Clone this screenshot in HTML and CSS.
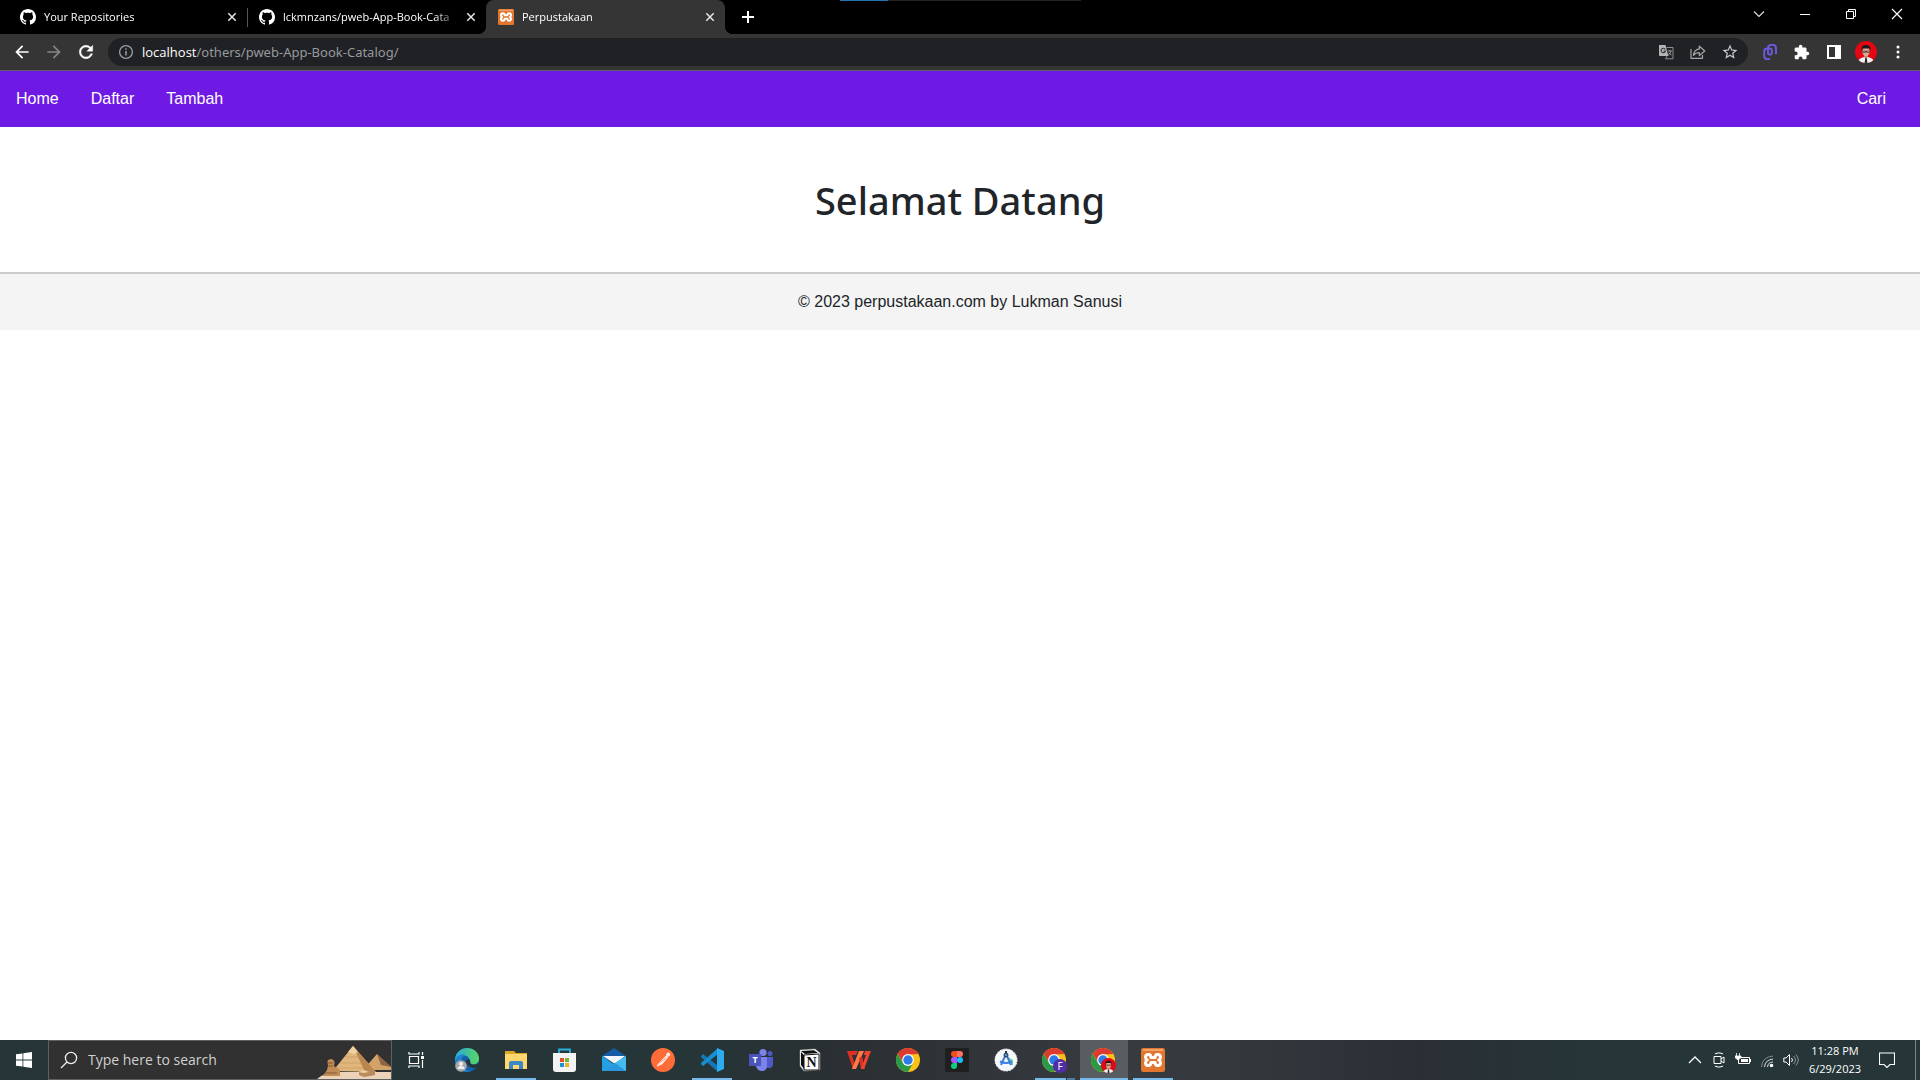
FILE: index.html
```html
<!DOCTYPE html>
<html lang="id">
<head>
<meta charset="utf-8">
<meta name="viewport" content="width=device-width, initial-scale=1">
<title>Perpustakaan</title>
<link rel="stylesheet" href="styles.css">
</head>
<body>
<svg class="defs" aria-hidden="true">
  <symbol id="github" viewBox="0 0 16 16"><path fill="#fff" d="M8 0C3.58 0 0 3.58 0 8c0 3.54 2.29 6.53 5.47 7.59.4.07.55-.17.55-.38 0-.19-.01-.82-.01-1.49-2.01.37-2.53-.49-2.69-.94-.09-.23-.48-.94-.82-1.13-.28-.15-.68-.52-.01-.53.63-.01 1.08.58 1.23.82.72 1.21 1.87.87 2.33.66.07-.52.28-.87.51-1.07-1.78-.2-3.64-.89-3.64-3.95 0-.87.31-1.59.82-2.15-.08-.2-.36-1.02.08-2.12 0 0 .67-.21 2.2.82.64-.18 1.32-.27 2-.27s1.36.09 2 .27c1.53-1.04 2.2-.82 2.2-.82.44 1.1.16 1.92.08 2.12.51.56.82 1.27.82 2.15 0 3.07-1.87 3.75-3.65 3.95.29.25.54.73.54 1.48 0 1.07-.01 1.93-.01 2.2 0 .21.15.46.55.38A8.01 8.01 0 0 0 16 8c0-4.42-3.58-8-8-8z"/></symbol>
  <symbol id="xampp" viewBox="0 0 24 24"><rect width="24" height="24" rx="2" fill="#e2762f"/><path d="M2 1h20v2H2z" fill="#f2a26c"/><path d="M7.500 6.500C5.300 6.500 4.500 7.800 4.500 9.300c0 1.500.9 2.200 1.800 2.700-1 .5-1.800 1.400-1.800 2.800 0 1.700 1 2.700 2.600 2.700 2.200 0 2.800-1.500 2.800-3h4.200c0 1.500.6 3 2.800 3 1.600 0 2.600-1 2.600-2.700 0-1.400-.8-2.300-1.800-2.800.9-.5 1.800-1.200 1.800-2.700 0-1.500-.8-2.800-3-2.800-2 0-2.400 1.500-2.400 2.900H9.900c0-1.400-.4-2.900-2.400-2.900z" fill="none" stroke="#fff" stroke-width="3" stroke-linejoin="round"/></symbol>
  <symbol id="cross" viewBox="0 0 16 16"><path d="M4.300 4.300l7.400 7.400M11.700 4.300l-7.400 7.400" stroke="#e8e8e8" stroke-width="1.500"/></symbol>
  <symbol id="arrow" viewBox="0 0 24 24"><path fill="currentColor" d="M20 11H7.830l5.590-5.590L12 4l-8 8 8 8 1.410-1.410L7.830 13H20v-2z"/></symbol>
  <symbol id="chrome" viewBox="0 0 24 24"><circle cx="12" cy="12" r="12" fill="#fbc116"/><path d="M1.600 6A12 12 0 0 1 22.400 6L12 6.500 7.200 14.600z" fill="#dc3b30"/><path d="M1.600 6A12 12 0 0 0 12 24l5-8.800-5 2.400-4.900-2.700z" fill="#2b9a48"/><circle cx="12" cy="12" r="5.900" fill="#fff"/><circle cx="12" cy="12" r="4.700" fill="#2d7bea"/></symbol>
  <symbol id="person" viewBox="0 0 22 22"><clipPath id="round"><circle cx="11" cy="11" r="11"/></clipPath><g clip-path="url(#round)"><path fill="#e30613" d="M0 0h22v22H0z"/><path d="M3 22c0-4 3-5 6-6h4c3 1 6 2 6 6z" fill="#f1f1f1"/><path d="M9 13h4v3l-2 2-2-2z" fill="#b98770"/><ellipse cx="11" cy="10.500" rx="3.700" ry="4.700" fill="#d9ab92"/><path d="M6.800 10C6 5.500 8 4 11 4s5 1.500 4.200 6l-.9-2.600H7.700z" fill="#201719"/><path d="M7.700 10h2.600v1.500H7.700zM11.700 10h2.600v1.500h-2.600zM10 10.500h2" fill="none" stroke="#332526" stroke-width=".6"/><path d="M10.300 17h1.400l.7 5H9.600z" fill="#222"/></g></symbol>
</svg>

<header class="browser">
  <div class="tabstrip">
    <div class="tabs">
      <div class="tab tab-divided"><svg class="i16"><use href="#github"/></svg><span class="tab-title">Your Repositories</span><button class="tab-close" aria-label="Close tab"><svg class="i16"><use href="#cross"/></svg></button></div>
      <div class="tab"><svg class="i16"><use href="#github"/></svg><span class="tab-title">lckmnzans/pweb-App-Book-Cata</span><button class="tab-close" aria-label="Close tab"><svg class="i16"><use href="#cross"/></svg></button></div>
      <div class="tab tab-active"><svg class="i16"><use href="#xampp"/></svg><span class="tab-title">Perpustakaan</span><button class="tab-close" aria-label="Close tab"><svg class="i16"><use href="#cross"/></svg></button></div>
      <button class="new-tab" aria-label="New tab"><svg class="i16" viewBox="0 0 16 16"><path d="M8 2v12M2 8h12" stroke="#fff" stroke-width="2"/></svg></button>
    </div>
    <div class="progress"><span></span></div>
    <div class="window-controls">
      <button aria-label="Search tabs"><svg class="i12" viewBox="0 0 12 12"><path d="M1 3.500l5 5 5-5" fill="none" stroke="#ddd" stroke-width="1.200"/></svg></button>
      <button aria-label="Minimize"><svg class="i12" viewBox="0 0 12 12"><path d="M1 6.500h10" stroke="#fff"/></svg></button>
      <button aria-label="Restore"><svg class="i12" viewBox="0 0 12 12"><path d="M1.500 3.500h7v7h-7zM3.500 3.500v-2h7v7h-2" fill="none" stroke="#fff"/></svg></button>
      <button aria-label="Close"><svg class="i12" viewBox="0 0 12 12"><path d="M1 1l10 10M11 1L1 11" stroke="#fff" stroke-width="1.200"/></svg></button>
    </div>
  </div>
  <div class="toolbar">
    <button class="tool" aria-label="Back"><svg class="i20"><use href="#arrow"/></svg></button>
    <button class="tool tool-forward" aria-label="Forward"><svg class="i20"><use href="#arrow"/></svg></button>
    <button class="tool" aria-label="Reload"><svg class="i20" viewBox="0 0 24 24"><path fill="#fff" stroke="#fff" stroke-width=".5" d="M17.650 6.350C16.200 4.900 14.210 4 12 4c-4.420 0-7.990 3.580-7.990 8s3.570 8 7.990 8c3.730 0 6.840-2.550 7.730-6h-2.080c-.82 2.330-3.040 4-5.650 4-3.310 0-6-2.690-6-6s2.690-6 6-6c1.660 0 3.140.69 4.220 1.780L13 11h7V4l-2.350 2.350z"/></svg></button>
    <div class="omnibox">
      <button class="tool" aria-label="Site information"><svg class="i16" viewBox="0 0 16 16"><circle cx="8" cy="8" r="6.400" fill="none" stroke="#9aa0a6" stroke-width="1.300"/><path d="M8 7v4.500M8 4.300v1.500" stroke="#9aa0a6" stroke-width="1.500"/></svg></button>
      <label class="host" for="address">localhost</label><input class="path" id="address" type="text" value="/others/pweb-App-Book-Catalog/">
      <button class="tool" aria-label="Translate"><svg class="i16" viewBox="0 0 16 16"><path d="M1 1h6.500l2.800 11H2a1 1 0 0 1-1-1z" fill="#b4b5b7"/><path d="M8.500 3.500H15v11.300H7.500L9 12" fill="none" stroke="#8c8e91"/><path d="M7.200 5.400A2.200 2.200 0 1 0 7.400 7H5.500" fill="none" stroke="#35363a" stroke-width="1.100"/><path d="M9.800 7h4M11.800 6v1M13 7c-.3 2-1.500 3.500-3 4.300M10.800 8.500c.6 1.200 1.600 2 2.700 2.600" fill="none" stroke="#a5a6a8" stroke-width=".9"/></svg></button>
      <button class="tool" aria-label="Share"><svg class="i16" viewBox="0 0 16 16"><path d="M1 5v9.300h11.500V11M9.300 2.200L14.800 7l-5.500 4.500V8.700C6 8.700 4.800 9.500 3.500 11.400c.3-3.600 2.300-6 5.800-6.500z" fill="none" stroke="#a4a6a8" stroke-width="1.200" stroke-linejoin="round"/></svg></button>
      <button class="tool" aria-label="Bookmark"><svg class="i18" viewBox="0 0 24 24"><path fill="#c7c9cc" d="M22 9.240l-7.190-.62L12 2 9.190 8.630 2 9.240l5.460 4.730L5.820 21 12 17.270 18.180 21l-1.630-7.030L22 9.240zM12 15.400l-3.760 2.270 1-4.280-3.320-2.880 4.380-.38L12 6.100l1.710 4.040 4.380.38-3.320 2.880 1 4.280L12 15.400z"/></svg></button>
    </div>
    <button class="tool" aria-label="Extension"><svg class="i16" viewBox="0 0 16 16"><path d="M14 10V4.300Q14 .9 10.800.9H9.200Q6 .9 6 4v5.300q0 1.200 1.200 1.200h1.300q1.300 0 1.300-1.300V6.500q0-2-2-2H5.200q-3 0-3 3v4.200q0 3.400 3.200 3.400h2.800" fill="none" stroke="#6a5be2" stroke-width="1.900"/></svg></button>
    <button class="tool" aria-label="Extensions"><svg class="i16" viewBox="1 0 23 23"><path fill="#fff" d="M20.500 11H19V7c0-1.100-.9-2-2-2h-4V3.500C13 2.120 11.880 1 10.500 1S8 2.120 8 3.500V5H4c-1.100 0-1.990.9-1.990 2v3.800H3.500c1.490 0 2.700 1.210 2.700 2.700s-1.210 2.700-2.700 2.700H2V20c0 1.100.9 2 2 2h3.800v-1.500c0-1.490 1.210-2.700 2.700-2.700 1.490 0 2.700 1.210 2.700 2.700V22H17c1.100 0 2-.9 2-2v-4h1.500c1.380 0 2.500-1.120 2.500-2.500S21.880 11 20.500 11z"/></svg></button>
    <button class="tool" aria-label="Side panel"><svg class="i16" viewBox="0 0 16 16"><path fill="#fff" fill-rule="evenodd" d="M1 1h14v14H1zM3 3v10h6V3z"/></svg></button>
    <button class="tool" aria-label="Profile"><svg class="i22"><use href="#person"/></svg></button>
    <button class="tool" aria-label="Menu"><svg class="i16" viewBox="0 0 16 16"><circle cx="8" cy="3" r="1.500" fill="#fff"/><circle cx="8" cy="8" r="1.500" fill="#fff"/><circle cx="8" cy="13" r="1.500" fill="#fff"/></svg></button>
  </div>
</header>

<div class="page">
  <nav class="navbar">
    <a href="#home">Home</a><a href="#daftar">Daftar</a><a href="#tambah">Tambah</a><a class="nav-search" href="#cari">Cari</a>
  </nav>
  <main class="welcome"><h1>Selamat Datang</h1></main>
  <footer class="footer">© 2023 perpustakaan.com by Lukman Sanusi</footer>
</div>

<div class="taskbar">
  <button class="task" aria-label="Start"><svg class="i16" viewBox="0 0 16 16"><path fill="#fff" d="M0 2.300L6.500 1.400v6.100H0zM7.300 1.300L16 0v7.500H7.300zM0 8.400h6.500v6.200L0 13.700zM7.300 8.400H16V16l-8.700-1.300z"/></svg></button>
  <div class="search">
    <svg class="i18" viewBox="0 0 18 18"><circle cx="11" cy="7" r="5.600" fill="none" stroke="#eee" stroke-width="1.300"/><path d="M7 11l-6 6" stroke="#eee" stroke-width="1.300"/></svg>
    <input type="text" placeholder="Type here to search" aria-label="Type here to search">
    <svg class="pyramids" viewBox="0 0 76 38"><path d="M2 38q8-7 20-7h54v7z" fill="#ecd2b8"/><path d="M62 13l14 13v3H48z" fill="#d2a268"/><path d="M62 13l14 13-10-2z" fill="#8d6540"/><path d="M38 5L18 30l43 1z" fill="#e0b67c"/><path d="M38 5l12 26h11z" fill="#b9864f"/><path d="M33 11l5-6 5 6-4 2z" fill="#efd29f"/><path d="M30 16h15M25 22h22M21 27h27" stroke="#c4965d" stroke-width=".6"/><path d="M9 33q4-4 4-9-2-6 3-6 5 1 3 7l6 4v6H8z" fill="#c08b54"/><path d="M13 22h5M13 25h5M10 32h12" stroke="#875b35"/><path d="M44 31l6-2 5 2v4l-6 1-5-2zM52 30l5-1 3 2v3l-5 1z" fill="#ba8b5d"/><path d="M43 31l6-2 5 2-5 1z" fill="#efcf9d"/></svg>
  </div>
  <button class="task task-view" aria-label="Task view"><svg class="i18" viewBox="0 0 18 18"><path d="M2.500 5.500h9v7h-9zM2 1v2h10V1M2 17v-2h10v2M15.500 1v3M15.500 9v8" fill="none" stroke="#fff" stroke-width="1.200"/><path d="M14 5h3v3h-3z" fill="#fff"/></svg></button>
  <button class="task" aria-label="Edge"><svg class="i24" viewBox="0 0 24 24"><defs><linearGradient id="eg"><stop stop-color="#29a9dc"/><stop offset="1" stop-color="#5bd661"/></linearGradient></defs><circle cx="12" cy="12" r="12" fill="#1361aa"/><path d="M0 11C1 4 6 0 12 0c7 0 12 5 12 10.500 0 4-3 6-6.500 6-3 0-4.800-1-4-2.500 2.500-4-1.500-7-5.500-6.500C3.500 8 .5 12 0 14z" fill="url(#eg)"/><path d="M0 12c2-5 7-7 11-5-5 1-6 7-3 12 2 3 5 4 8 4-8 3-16-3-16-11z" fill="#2084cc"/><path d="M14.500 11c1.500 4 0 5 4 5.500 2 0 4-.5 4.500-1.500l1 4-5 1c-5-.5-9-4-8-8z" fill="#263638"/><circle cx="6" cy="18" r="5.800" fill="#a7a9a9"/><circle cx="6" cy="15.800" r="2.100" fill="#eee"/><path d="M2.500 21q0-3 3.500-3t3.500 3z" fill="#eee"/></svg></button>
  <button class="task running" aria-label="File Explorer"><svg class="i24" viewBox="0 0 24 24"><path d="M1 3h9l2 2h11v16H1z" fill="#dda723"/><path d="M1 6h22v15H1z" fill="#ffd76d"/><path d="M5 21v-6q0-2 2-2h10q2 0 2 2v6h-4v-4H9v4z" fill="#3c87c8"/></svg></button>
  <button class="task" aria-label="Microsoft Store"><svg class="i24" viewBox="1 0 24 24"><path d="M7 6V1.500h11V6" fill="none" stroke="#2ab1df" stroke-width="1.800"/><path d="M1 5h23v16q0 3-3 3H4q-3 0-3-3z" fill="#f3f3f3"/><path d="M8 10h4v4H8z" fill="#e34f2b"/><path d="M13 10h4v4h-4z" fill="#75b72b"/><path d="M8 15h4v4H8z" fill="#1c95d4"/><path d="M13 15h4v4h-4z" fill="#f1b322"/></svg></button>
  <button class="task" aria-label="Mail"><svg class="i24" viewBox="0 0 24 24"><path d="M0 8L12 0l12 8v4H0z" fill="#155ca5"/><path d="M1 8h22l-10 8z" fill="#f3f7fa"/><path d="M0 8l13 9-10 6H0z" fill="#23a0e3"/><path d="M24 8v15H0z" fill="#42bced"/><path d="M13 15l11 8H0z" fill="#2998dc"/></svg></button>
  <button class="task" aria-label="Postman"><svg class="i24" viewBox="0 0 24 24"><circle cx="12" cy="12" r="12" fill="#ff6c37"/><path d="M6 18l3-4 6-6 2 1-6 7zM15 8l3-2" fill="#ffe8df" stroke="#ffe8df"/><circle cx="17.300" cy="6.500" r="2" fill="#ffe8df"/><path d="M8 15l7-5" stroke="#ff6c37" stroke-width=".6"/></svg></button>
  <button class="task running" aria-label="Visual Studio Code"><svg class="i24" viewBox="0 0 24 24"><path d="M1 8l2-2 15 12v6L1 9z" fill="#1377b9"/><path d="M1 16l2 2L18 6V0L1 15z" fill="#178dd2"/><path d="M17 0l7 3v18l-7 3V0z" fill="#2eabef"/></svg></button>
  <button class="task" aria-label="Teams"><svg class="i24" viewBox="0 0 24 24"><circle cx="14" cy="4.500" r="3.600" fill="#7c83eb"/><circle cx="21" cy="5.500" r="2.500" fill="#5058c5"/><path d="M16 9h8v7q0 4-4 4h-4z" fill="#5059c9"/><path d="M8 9h10v8q0 6-5 6t-6-5z" fill="#7b83eb"/><path d="M0 6h12v12H0z" fill="#4b53bc"/><text x="6" y="15" class="logo-t">T</text></svg></button>
  <button class="task" aria-label="Notion"><svg class="i24" viewBox="0 0 24 24"><path d="M2 2l15-1 5 4v17l-16 1-4-5z" fill="#fff" stroke="#aaa" stroke-width=".5"/><path d="M3 3l13-.8L20 5 7 6zM3 4l3 3v14l-3-4z" fill="#111"/><path d="M6 7l15-1v16L6 22z" fill="#fff" stroke="#111"/><text x="13.500" y="19" class="logo-n">N</text></svg></button>
  <button class="task" aria-label="WPS Office"><svg class="i24" viewBox="0 0 24 24"><path d="M0 3h11l-2 4H5l4 14H6z" fill="#df3122"/><path d="M12 3h5L9 21H5z" fill="#ff7a4a"/><path d="M12 10l3-2 3 13h-4z" fill="#df3122"/><path d="M24 3l-7 18h-3l5-14h-2l1-4z" fill="#f2452f"/></svg></button>
  <button class="task" aria-label="Chrome"><svg class="i24"><use href="#chrome"/></svg></button>
  <button class="task" aria-label="Figma"><svg class="i24" viewBox="0 0 24 24"><rect width="24" height="24" rx="1" fill="#1f1f20"/><path d="M12 3H9a3 3 0 0 0 0 6h3z" fill="#f24e1e"/><path d="M12 3h3a3 3 0 0 1 0 6h-3z" fill="#ff7262"/><path d="M12 9H9a3 3 0 0 0 0 6h3z" fill="#a259ff"/><circle cx="15" cy="12" r="3" fill="#1abcfe"/><path d="M12 15H9a3 3 0 1 0 3 3z" fill="#0acf83"/></svg></button>
  <button class="task" aria-label="Android Studio"><svg class="i24" viewBox="0 0 24 24"><circle cx="12" cy="12" r="11" fill="#f5f8fa" stroke="#f5f8fa" stroke-dasharray="2 1"/><path d="M14 9l5 3v5h-3z" fill="#64d79a"/><path d="M12 6L7 17M12 6l5 11M6 13.500q6 3 12 0" fill="none" stroke="#3b7de1" stroke-width="2"/><path d="M12 3v3" stroke="#243746" stroke-width="2"/><circle cx="12" cy="7" r="2" fill="#5890d8" stroke="#243746"/></svg></button>
  <button class="task running grouped" aria-label="Chrome, profile F"><svg class="i26" viewBox="1 1 26 26"><use href="#chrome" x="1" y="2" width="24" height="24"/><circle cx="19" cy="20" r="7" fill="#512da8"/><text x="19" y="24" class="logo-f">F</text></svg></button>
  <button class="task current" aria-label="Chrome, current window"><svg class="i26" viewBox="1 1 26 26"><use href="#chrome" x="1" y="2" width="24" height="24"/><use href="#person" x="11" y="12" width="15" height="15"/></svg></button>
  <button class="task running" aria-label="XAMPP"><svg class="i24"><use href="#xampp"/></svg></button>

  <div class="tray">
    <button aria-label="Show hidden icons"><svg class="i16" viewBox="0 0 16 16"><path d="M2 11l6-6 6 6" fill="none" stroke="#fff" stroke-width="1.300"/></svg></button>
    <button aria-label="Meet now"><svg class="i16" viewBox="0 0 16 16"><path d="M3 4.500h7v7H3zM10 7l3-2v6l-3-2M4 1.800q4-2 8 0M4 14.200q4 2 8 0" fill="none" stroke="#fff"/></svg></button>
    <button aria-label="Battery"><svg class="i16" viewBox="0 0 16 16"><path d="M5 5.500h9.500v6H3.500V8M15.500 7v3" fill="none" stroke="#fff"/><path d="M6 7h7v3H6z" fill="#fff"/><path d="M1.500 1v3M4.500 1v3M0 4h6v1.500L3 8 0 5.500z" fill="#fff" stroke="#fff" stroke-width=".8"/></svg></button>
    <button aria-label="Network"><svg class="i16" viewBox="0 0 16 16"><path d="M2.500 15Q3 5 14 4" fill="none" stroke="#80898a"/><path d="M5.500 15Q6 8 14 7M8.500 15q.5-5 5.500-5" fill="none" stroke="#d8dcdc"/><circle cx="12.500" cy="13.500" r="1.800" fill="#fff"/></svg></button>
    <button aria-label="Volume"><svg class="i16" viewBox="0 0 16 16"><path d="M.8 6H3l3.500-3.500v11L3 10H.8z" fill="none" stroke="#fff"/><path d="M8.500 6q2 2 0 4" fill="none" stroke="#fff"/><path d="M10.500 4q4 4 0 8M12.800 2.500q5 5.500 0 11" fill="none" stroke="#8b9596"/></svg></button>
    <div class="clock"><time>11:28 PM</time><time>6/29/2023</time></div>
    <button class="notice" aria-label="Notifications"><svg class="i16" viewBox="0 0 16 16"><path d="M.5 1h15v11.500H11L8 15.500l-3-3H.5z" fill="none" stroke="#fff" stroke-width="1.100"/></svg></button>
    <button class="show-desktop" aria-label="Show desktop"></button>
  </div>
</div>
</body>
</html>
```
FILE: styles.css
```css
* { box-sizing: border-box; }

body {
  margin: 0;
  min-height: 100vh;
  display: flex;
  flex-direction: column;
  background: #fff;
  color: #212529;
  font-family: "Liberation Sans", Arial, sans-serif;
  font-size: 16px;
  line-height: 24px;
}

button, input { margin: 0; padding: 0; border: 0; background: none; font: inherit; color: inherit; }
button { display: flex; align-items: center; justify-content: center; flex: none; }
svg { display: block; flex: none; }
.defs { width: 0; height: 0; position: absolute; }
.i12 { width: 12px; height: 12px; }
.i16 { width: 16px; height: 16px; }
.i18 { width: 18px; height: 18px; }
.i20 { width: 20px; height: 20px; }
.i22 { width: 22px; height: 22px; }
.i24 { width: 24px; height: 24px; }
.i26 { width: 26px; height: 26px; }

/* Browser window */
.browser { color: #fff; font-family: "Open Sans", "Noto Sans", sans-serif; }
.tabstrip { position: relative; display: flex; justify-content: space-between; height: 34px; background: #000; }
.tabs { display: flex; padding-left: 8px; }
.tab { position: relative; display: flex; align-items: center; width: 239px; padding: 0 7px 0 12px; font-size: 11px; }
.tab-title {
  flex: 1;
  min-width: 0;
  margin: 0 4px 0 8px;
  white-space: nowrap;
  mask-image: linear-gradient(to right, #000 calc(100% - 24px), transparent);
}
.tab-divided::after { content: ""; position: absolute; right: -1px; top: 8px; width: 1px; height: 19px; background: #555; }
.tab-active { background: #353535; border-radius: 8px 8px 0 0; }
.tab-active::before, .tab-active::after { content: ""; position: absolute; bottom: 0; width: 8px; height: 8px; }
.tab-active::before { left: -8px; background: radial-gradient(circle at 0 0, #000 8px, #353535 8px); }
.tab-active::after { right: -8px; background: radial-gradient(circle at 100% 0, #000 8px, #353535 8px); }
.new-tab { width: 28px; margin-left: 9px; }
.progress { position: absolute; top: 0; left: 840px; width: 241px; height: 1px; background: #222; }
.progress span { display: block; width: 20%; height: 1px; background: #2473ad; }
.window-controls { display: flex; height: 28px; }
.window-controls button { width: 46px; }

.toolbar { display: flex; align-items: center; gap: 4px; height: 37px; padding: 0 8px; background: #353535; border-bottom: 1px solid #5f5f66; }
.tool { width: 28px; height: 28px; }
.tool-forward { color: #858585; }
.tool-forward svg { transform: rotate(180deg); }
.omnibox { flex: 1; display: flex; align-items: center; gap: 4px; height: 28px; margin: 0 4px; padding: 0 4px; border-radius: 14px; background: #202124; font-size: 13px; }
.host { margin-left: -2px; }
.path { flex: 1; min-width: 0; margin-left: -4px; font-family: "Noto Sans", "Open Sans", sans-serif; color: #96999d; }

/* Library page */
.page { flex: 1; }
.navbar { display: flex; padding-right: 18px; background: #6e1ae4; color: #fff; }
.navbar a { padding: 16px; color: inherit; text-decoration: none; }
.navbar .nav-search { margin-left: auto; }
.welcome { padding: 49px 16px 48px; }
.welcome h1 { margin: 0; font: 500 38px/48px "Noto Sans", "Open Sans", sans-serif; text-align: center; }
.footer { padding: 16px; border-top: 2px solid #ccc; background: #f4f4f4; text-align: center; }

/* Desktop taskbar */
.taskbar {
  display: flex;
  height: 40px;
  color: #fff;
  font-family: "Open Sans", "Noto Sans", sans-serif;
  background: linear-gradient(to right, #263638 36%, #292f32 43%, #303337 50%, #373c41 58%, #33373c 66%, #2a2f35 74%, #263638 84%);
}
.search { display: flex; align-items: center; width: 344px; padding-left: 11px; border: 1px solid #606060; background: #313131; }
.search input { flex: 1; min-width: 0; margin-left: 10px; font-size: 14px; }
.search input::placeholder { color: #d0d0d0; opacity: 1; }
.pyramids { width: 76px; height: 38px; }
.task { position: relative; width: 48px; margin-right: 1px; }
.task:first-child { margin-right: 0; }
.task-view { margin-right: 3px; }
.running::after { content: ""; position: absolute; left: 4px; right: 4px; bottom: 0; height: 2px; background: #76b9ed; }
.grouped::after { background: linear-gradient(to right, #76b9ed 31px, #263638 31px, #263638 32px, #4f7b9c 32px); }
.current { background: #575d61; border-bottom: 2px solid #76b9ed; padding-top: 2px; }
.logo-t, .logo-f { font: 700 9px "Open Sans", sans-serif; fill: #fff; text-anchor: middle; }
.logo-f { font-weight: 400; font-size: 10px; }
.logo-n { font: 700 14px "Liberation Serif", serif; fill: #111; text-anchor: middle; }
.tray { display: flex; margin-left: auto; }
.tray button { width: 24px; }
.clock { display: flex; flex-direction: column; justify-content: center; width: 64px; font-size: 11px; line-height: 18px; text-align: center; }
.tray .notice { width: 40px; }
.tray .show-desktop { width: 5px; margin-left: 8px; border-left: 1px solid #7b8586; }
```
